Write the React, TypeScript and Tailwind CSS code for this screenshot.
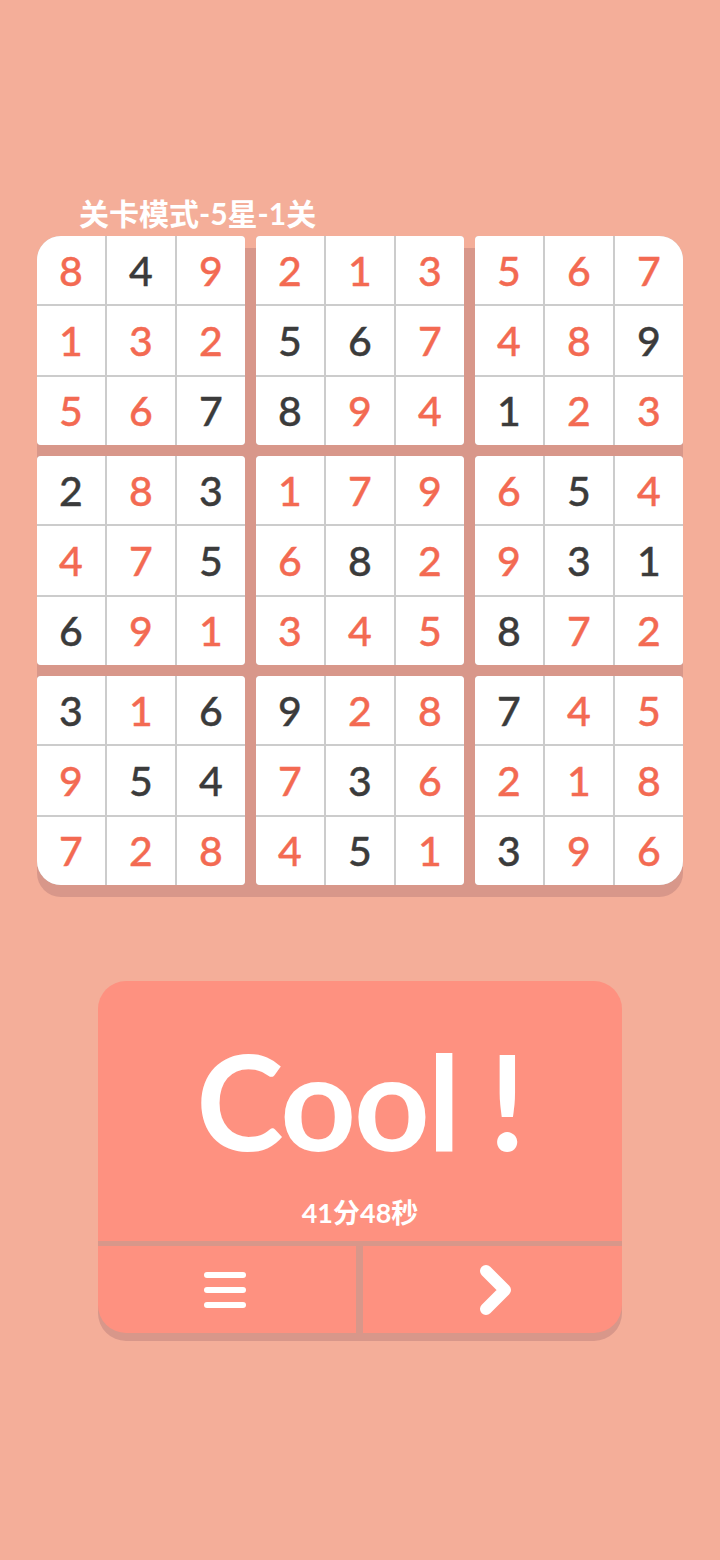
import React from "react";

const SOLUTION = [
  "849213567",
  "132567489",
  "567894123",
  "283179654",
  "475682931",
  "691345872",
  "316928745",
  "954736218",
  "728451396",
];

const GIVEN = [
  "010000000",
  "000110001",
  "001100100",
  "101000010",
  "001010011",
  "100000100",
  "101100100",
  "011010000",
  "000010100",
];

const cornerClass = [
  "rounded-[4px] rounded-tl-[24px]",
  "rounded-[4px]",
  "rounded-[4px] rounded-tr-[24px]",
  "rounded-[4px]",
  "rounded-[4px]",
  "rounded-[4px]",
  "rounded-[4px] rounded-bl-[24px]",
  "rounded-[4px]",
  "rounded-[4px] rounded-br-[24px]",
];

const Box: React.FC<{ index: number }> = ({ index }) => {
  const br = Math.floor(index / 3) * 3;
  const bc = (index % 3) * 3;
  const cells: { v: string; given: boolean }[] = [];
  for (let r = 0; r < 3; r++) {
    for (let c = 0; c < 3; c++) {
      cells.push({ v: SOLUTION[br + r][bc + c], given: GIVEN[br + r][bc + c] === "1" });
    }
  }
  return (
    <div className={`grid grid-cols-3 gap-[2px] bg-[#cccccc] overflow-hidden h-[209px] ${cornerClass[index]}`}>
      {cells.map((cell, i) => (
        <div
          key={i}
          className={`bg-white flex items-center justify-center text-[41px] font-medium leading-none [-webkit-text-stroke:0.4px_currentColor] ${
            cell.given ? "text-[#3b3b3b]" : "text-[#f36a52]"
          }`}
        >
          {cell.v}
        </div>
      ))}
    </div>
  );
};

export default function App() {
  return (
    <div
      className="min-h-[1560px] w-full bg-[#f4ae99] flex flex-col"
      style={{ fontFamily: "Lato, 'Noto Sans CJK SC', sans-serif" }}
    >
      <div className="pt-[195px] pl-[79px] h-[231px]">
        <h1 className="text-white font-bold text-[30px] leading-[36px]">关卡模式-5星-1关</h1>
      </div>

      <div className="relative mx-[37px] mt-[5px]">
        <div className="absolute inset-x-0 top-[12px] -bottom-[12px] bg-[#d8978a] rounded-[24px]" />
        <div className="relative grid grid-cols-3 gap-[11px]">
          {Array.from({ length: 9 }).map((_, i) => (
            <Box key={i} index={i} />
          ))}
        </div>
      </div>

      <div className="relative mx-[98px] mt-[96px]">
        <div className="absolute inset-x-0 top-[10px] -bottom-[8px] bg-[#d8978a] rounded-[28px]" />
        <div className="relative flex flex-col gap-[5px]">
          <div className="bg-[#fe9180] rounded-t-[28px] h-[260px] flex flex-col items-center pt-[53px]">
            <div className="text-white font-bold text-[132px] leading-none tracking-[-2px]">Cool !</div>
            <div className="mt-[33px] text-white font-bold text-[27px] leading-[28px]">41分48秒</div>
          </div>
          <div className="flex gap-[7px] h-[87px]">
            <button className="flex-1 bg-[#fe9180] rounded-bl-[28px] flex items-center justify-center pr-[5px]">
              <svg width="44" height="38" viewBox="0 0 44 38">
                <g stroke="white" strokeWidth="6" strokeLinecap="round">
                  <line x1="4" y1="4" x2="40" y2="4" />
                  <line x1="4" y1="19" x2="40" y2="19" />
                  <line x1="4" y1="34" x2="40" y2="34" />
                </g>
              </svg>
            </button>
            <button className="flex-1 bg-[#fe9180] rounded-br-[28px] flex items-center justify-center pl-[6px]">
              <svg width="36" height="52" viewBox="0 0 36 52">
                <polyline
                  points="8,7 27,26 8,45"
                  fill="none"
                  stroke="white"
                  strokeWidth="12"
                  strokeLinecap="round"
                  strokeLinejoin="round"
                />
              </svg>
            </button>
          </div>
        </div>
      </div>
    </div>
  );
}
